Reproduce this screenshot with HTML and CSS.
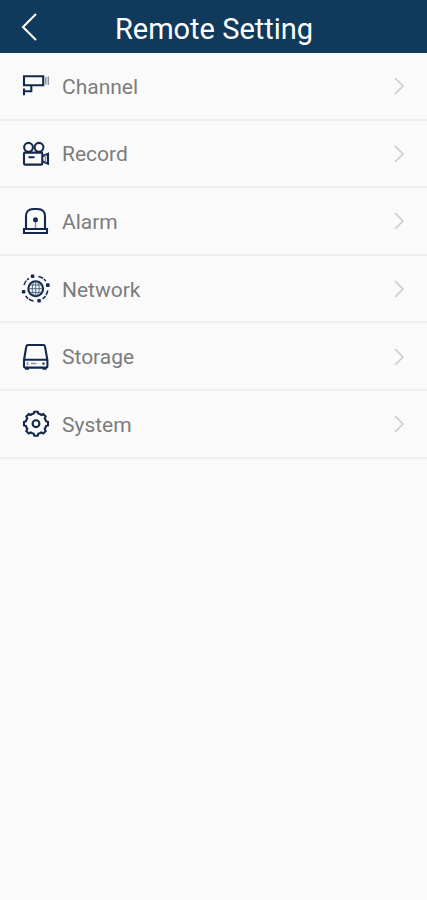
FILE: index.html
```html
<!DOCTYPE html>
<html lang="en">
<head>
<meta charset="UTF-8">
<meta name="viewport" content="width=device-width, initial-scale=1.0">
<title>Remote Setting</title>
<link rel="stylesheet" href="styles.css">
</head>
<body>
<header class="header">
    <svg class="back" viewBox="0 0 18 30"><path d="M16 2 L3 15 L16 28"/></svg>
    <h1>Remote Setting</h1>
</header>

<ul class="menu">
    <li>
        <svg class="icon" viewBox="0 0 40 40">
            <path d="M9 10.2H28.2V19.3H9ZM16.3 19.5V25.3H9.5M9 22.5V29.3"/>
            <path class="soft" d="M30.7 11V18.5M33.3 10.5V19"/>
        </svg>
        <span class="label">Channel</span>
        <svg class="arrow" viewBox="0 0 12 20"><path d="M2 2 L10 10 L2 18"/></svg>
    </li>
    <li>
        <svg class="icon" viewBox="0 0 40 40">
            <circle cx="13.5" cy="13.3" r="4.4"/>
            <circle cx="24" cy="13.3" r="4.4"/>
            <rect x="9" y="18.6" width="18.3" height="12" rx="1"/>
            <path d="M13.5 23.2H19.5M28 22L33 19.8V29.7L28 27.5"/>
            <path class="soft" d="M30.5 21V28.5"/>
        </svg>
        <span class="label">Record</span>
        <svg class="arrow" viewBox="0 0 12 20"><path d="M2 2 L10 10 L2 18"/></svg>
    </li>
    <li>
        <svg class="icon" viewBox="0 0 40 40">
            <path d="M11 27.5V15.5Q11 8 18.5 8H22.5Q30 8 30 15.5V27.5"/>
            <path d="M9 28H32V32H9Z"/>
            <path class="soft" d="M20.5 20V27"/>
            <circle class="solid" cx="20.5" cy="18.7" r="2.5"/>
        </svg>
        <span class="label">Alarm</span>
        <svg class="arrow" viewBox="0 0 12 20"><path d="M2 2 L10 10 L2 18"/></svg>
    </li>
    <li>
        <svg class="icon" viewBox="0 0 40 40">
            <circle cx="20.7" cy="19.7" r="7.4"/>
            <g class="thin">
                <ellipse cx="20.7" cy="19.7" rx="3.5" ry="7.2"/>
                <path d="M20.7 12.5V27M13.5 19.7H28M14.5 16H27M14.5 23.4H27"/>
            </g>
            <path class="ring" d="M9 16Q10.5 11.5 14 9.5M23.5 7.5Q28 8.5 30.8 12M32.8 21.5Q31.7 27 27.5 30M18.5 32Q13.5 31 10.7 27"/>
            <g class="solid">
                <rect x="15.8" y="5.5" width="3.6" height="3.6" rx="1"/>
                <rect x="31" y="14.3" width="3.6" height="3.6" rx="1"/>
                <rect x="6.8" y="21" width="3.6" height="3.6" rx="1"/>
                <rect x="22.3" y="30" width="3.6" height="3.6" rx="1"/>
            </g>
        </svg>
        <span class="label">Network</span>
        <svg class="arrow" viewBox="0 0 12 20"><path d="M2 2 L10 10 L2 18"/></svg>
    </li>
    <li>
        <svg class="icon" viewBox="0 0 40 40">
            <path d="M9 23L11.3 9.5Q11.5 8 13 8H28.3Q29.8 8 30 9.5L32.4 23V29Q32.4 30.6 31 30.6H10.5Q9 30.6 9 29ZM9 22.7H32.4"/>
            <path class="base" d="M10 31.7H14M27.5 31.7H31.5"/>
            <path class="soft" d="M12.5 25V28.3M16 26.5H21.5"/>
            <circle class="solid" cx="28.5" cy="26.6" r="1.2"/>
        </svg>
        <span class="label">Storage</span>
        <svg class="arrow" viewBox="0 0 12 20"><path d="M2 2 L10 10 L2 18"/></svg>
    </li>
    <li>
        <svg class="icon" viewBox="0 0 40 40">
            <path class="gear" d="M18.7 9.6L19.3 7.7H22.7L23.3 9.6Q25 10 26.3 11L28.3 10L30.7 12.4L29.7 14.4Q30.7 15.6 31 17.3L33 18V21.4L31 22Q30.7 23.7 29.7 25L30.7 27L28.3 29.4L26.3 28.4Q25 29.4 23.3 29.7L22.7 31.7H19.3L18.7 29.7Q17 29.4 15.7 28.4L13.7 29.4L11.3 27L12.3 25Q11.3 23.7 11 22L9 21.4V18L11 17.3Q11.3 15.6 12.3 14.4L11.3 12.4L13.7 10L15.7 11Q17 10 18.7 9.6Z"/>
            <circle cx="21" cy="19.7" r="3.4"/>
        </svg>
        <span class="label">System</span>
        <svg class="arrow" viewBox="0 0 12 20"><path d="M2 2 L10 10 L2 18"/></svg>
    </li>
</ul>
</body>
</html>
```
FILE: styles.css
```css
body {
    font-family: Roboto, sans-serif;
    margin: 0;
    padding: 0;
    background-color: #fafafa;
}

.header {
    display: flex;
    align-items: center;
    height: 53px;
    padding: 0 20px;
    box-sizing: border-box;
    background-color: #103a5c;
    color: #fff;
}

.header h1 {
    flex: 1;
    margin: 0;
    padding: 4px 17px 0 0;
    font-size: 29px;
    line-height: 34px;
    font-weight: 400;
    text-align: center;
}

.back {
    width: 18px;
    height: 30px;
    fill: none;
    stroke: #fff;
    stroke-width: 2.1;
}

.menu {
    list-style-type: none;
    margin: 0;
    padding: 0;
}

.menu li {
    display: flex;
    align-items: center;
    height: 67.6px;
    padding: 0 22px 0 15px;
    box-sizing: border-box;
    border-bottom: 2px solid #efefef;
}

.icon {
    width: 40px;
    height: 40px;
    padding-top: 1px;
    fill: none;
    stroke: #14284c;
    stroke-width: 2.1;
}

.icon .soft {
    stroke: #8b92a8;
    stroke-width: 1.5;
}

.icon .thin {
    stroke: #3c5878;
    stroke-width: 0.9;
}

.icon .ring {
    stroke-width: 1.5;
    stroke-dasharray: 5 1;
}

.icon .base,
.icon .gear {
    stroke-width: 2.1;
}

.icon .solid {
    fill: #14284c;
    stroke: none;
}

.label {
    flex: 1;
    padding: 2px 0 0 7px;
    font-size: 21px;
    color: #7c7c7c;
}

.arrow {
    width: 12px;
    height: 20px;
    padding-top: 1px;
    fill: none;
    stroke: #ccc;
    stroke-width: 1.6;
}
```
